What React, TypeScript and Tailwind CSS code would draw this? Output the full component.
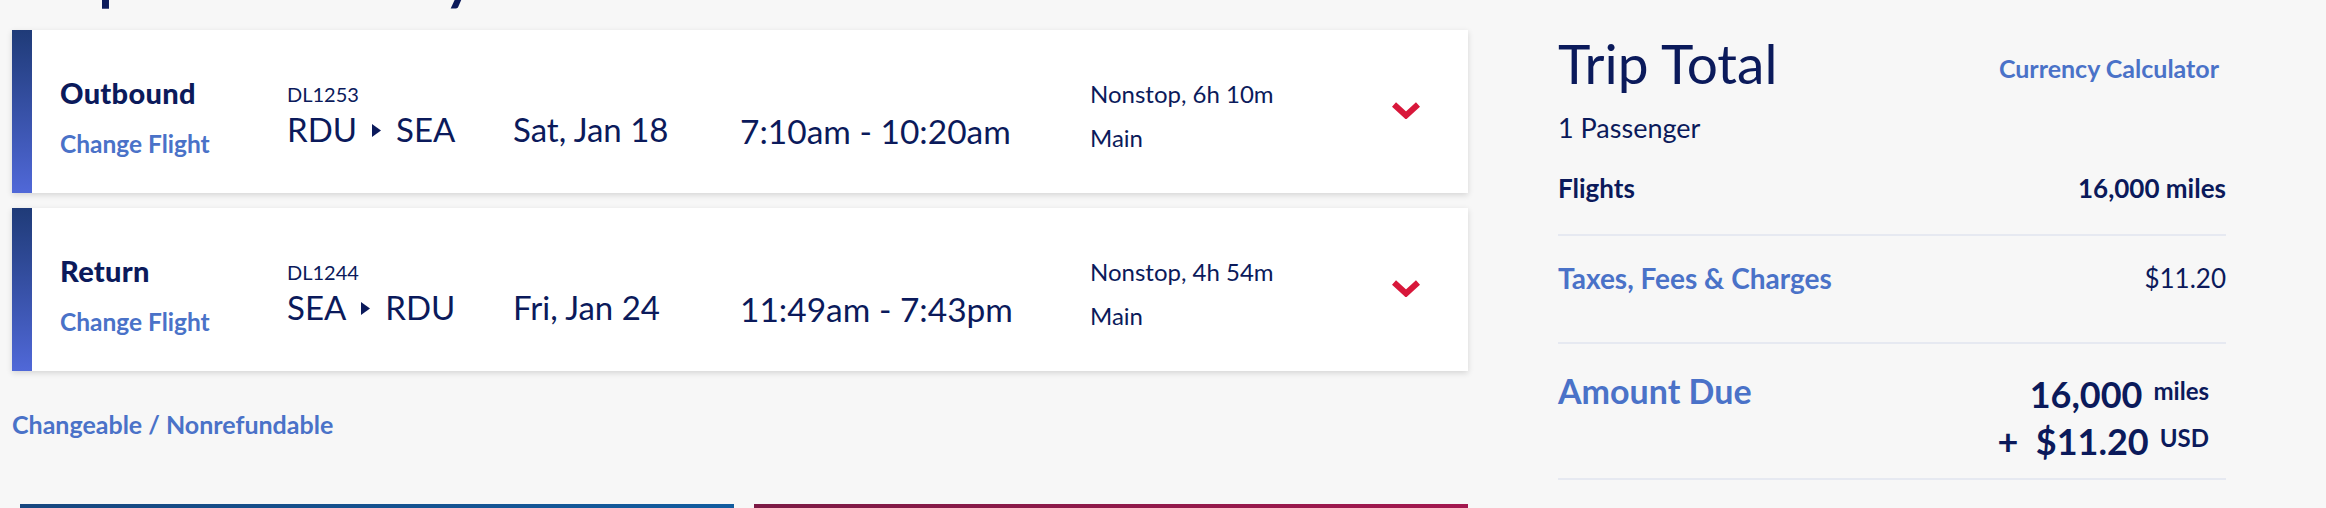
import React from 'react';

interface Flight {
  label: string;
  number: string;
  from: string;
  to: string;
  date: string;
  time: string;
  duration: string;
  cabin: string;
}

const FLIGHTS: Flight[] = [
  { label: 'Outbound', number: 'DL1253', from: 'RDU', to: 'SEA', date: 'Sat, Jan 18', time: '7:10am - 10:20am', duration: 'Nonstop, 6h 10m', cabin: 'Main' },
  { label: 'Return', number: 'DL1244', from: 'SEA', to: 'RDU', date: 'Fri, Jan 24', time: '11:49am - 7:43pm', duration: 'Nonstop, 4h 54m', cabin: 'Main' },
];

function Chevron() {
  return (
    <svg width="28" height="17" viewBox="0 0 28 17" className="block">
      <path d="M2 2.5 L14 13.5 L26 2.5" fill="none" stroke="#d8173a" strokeWidth="6" strokeLinejoin="miter" />
    </svg>
  );
}

function FlightCard({ flight }: { flight: Flight }) {
  return (
    <div className="flex h-[163px] bg-white shadow-[0_2px_6px_rgba(0,0,0,0.14)]">
      {/* accent bar */}
      <div className="w-[20px] shrink-0 bg-gradient-to-b from-[#1f3b78] to-[#5068d8]"></div>

      <div className="grid grid-cols-[227px_226px_227px_350px_302px_28px] items-start pl-[28px] pt-[48px]">
        <div>
          <div className="text-[29px] leading-none font-black text-[#0b1a5b] tracking-[0.3px]">{flight.label}</div>
          <div className="mt-[25px] text-[24.5px] leading-none font-bold text-[#4a72c8]">Change Flight</div>
        </div>

        <div className="mt-[6px]">
          <div className="text-[20px] leading-none text-[#0b1a5b]">{flight.number}</div>
          <div className="mt-[9px] flex items-center text-[33px] leading-none text-[#0b1a5b]">
            <span>{flight.from}</span>
            <svg width="9" height="13" viewBox="0 0 9 13" className="mx-[15px] mt-[2px]">
              <path d="M0 0 L9 6.5 L0 13 Z" fill="#0b1a5b" />
            </svg>
            <span>{flight.to}</span>
          </div>
        </div>

        <div className="mt-[35px] text-[33px] leading-none text-[#0b1a5b]">{flight.date}</div>

        <div className="mt-[37px] text-[33.5px] leading-none text-[#0b1a5b]">{flight.time}</div>

        <div className="mt-[4px]">
          <div className="text-[24px] leading-none text-[#0b1a5b]">{flight.duration}</div>
          <div className="mt-[20px] text-[24px] leading-none text-[#0b1a5b]">{flight.cabin}</div>
        </div>

        <div className="mt-[24px]">
          <Chevron />
        </div>
      </div>
    </div>
  );
}

export default function App() {
  return (
    <div className="h-[508px] overflow-hidden bg-[#f7f7f7] font-['Lato','Open_Sans',sans-serif]">
      <div className="flex pl-[12px]">
        {/* Left column: flights */}
        <div className="w-[1456px] shrink-0">
          <div className="h-[30px] overflow-hidden">
            <h1 className="mt-[-74px] text-[78px] leading-none text-[#0b1a5b] whitespace-nowrap">Trip Summary</h1>
          </div>

          <div className="flex flex-col gap-[15px]">
            {FLIGHTS.map((f) => (
              <FlightCard key={f.number} flight={f} />
            ))}
          </div>

          <div className="mt-[41px] text-[25px] leading-none font-bold text-[#4a72c8]">Changeable / Nonrefundable</div>

          <div className="mt-[67px] flex gap-[20px] pl-[8px]">
            <div className="h-[60px] flex-1 bg-gradient-to-r from-[#17477f] to-[#125c9f]"></div>
            <div className="h-[60px] flex-1 bg-gradient-to-r from-[#7c1a45] to-[#a3174f]"></div>
          </div>
        </div>

        {/* Right column: trip total */}
        <div className="ml-[90px] w-[668px] shrink-0 pt-[36px]">
          <div className="flex items-start justify-between">
            <div className="text-[55px] leading-none text-[#0b1a5b]">Trip Total</div>
            <div className="mt-[20px] mr-[7px] text-[25px] leading-none font-bold text-[#4a72c8]">Currency Calculator</div>
          </div>
          <div className="mt-[23px] text-[27px] leading-none text-[#0b1a5b]">1 Passenger</div>

          <div className="mt-[34px] flex justify-between text-[26px] leading-none font-bold text-[#0b1a5b]">
            <span>Flights</span>
            <span>16,000 miles</span>
          </div>
          <div className="mt-[33px] h-[2px] bg-[#e6e9f1]"></div>

          <div className="mt-[28px] flex justify-between leading-none">
            <span className="text-[28px] font-bold text-[#4a72c8]">Taxes, Fees &amp; Charges</span>
            <span className="text-[26px] mt-[1px] text-[#0b1a5b]">$11.20</span>
          </div>
          <div className="mt-[50px] h-[2px] bg-[#e6e9f1]"></div>

          <div className="mt-[30px] flex items-start justify-between">
            <div className="text-[34px] leading-none font-bold text-[#4a72c8]">Amount Due</div>
            <div className="mt-[2px] mr-[17px] flex flex-col items-end text-[#0b1a5b] font-bold">
              <div className="flex items-start">
                <span className="text-[36px] leading-none">16,000</span>
                <span className="ml-[11px] mt-[3px] text-[24px] leading-none">miles</span>
              </div>
              <div className="mt-[11px] flex items-start">
                <span className="text-[36px] leading-none">+&nbsp;&nbsp;$11.20</span>
                <span className="ml-[11px] mt-[3px] text-[24px] leading-none">USD</span>
              </div>
            </div>
          </div>
          <div className="mt-[19px] h-[2px] bg-[#e6e9f1]"></div>
        </div>
      </div>
    </div>
  );
}
